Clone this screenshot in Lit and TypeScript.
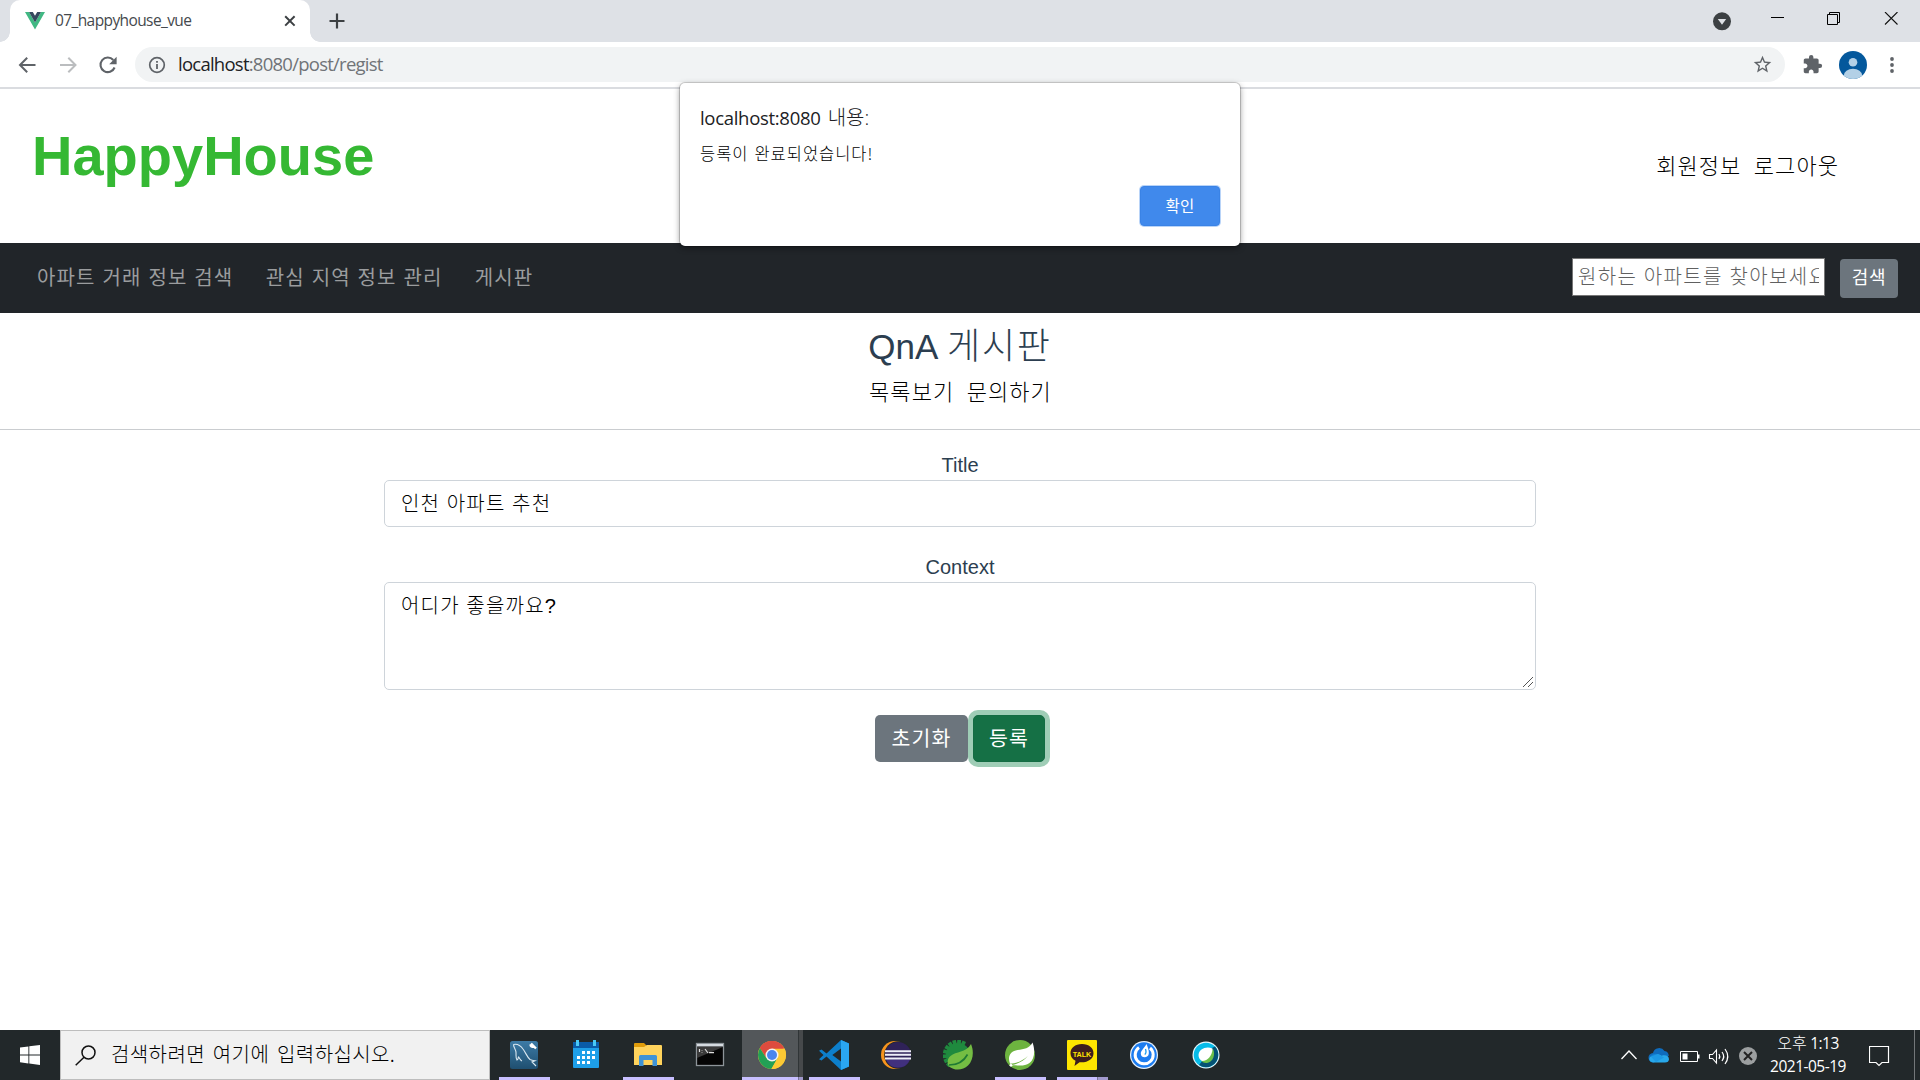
import { LitElement, html, css, svg } from "lit";
import { customElement } from "lit/decorators.js";

const UI_FONT = css`"Open Sans", "Noto Sans CJK KR", sans-serif`;

@customElement("browser-chrome")
class BrowserChrome extends LitElement {
  static styles = css`
    :host { display: block; height: 89px; font-family: ${UI_FONT}; }
    svg { display: block; flex: none; }
    .strip { height: 42px; background: #dee1e6; display: flex; align-items: flex-start; justify-content: space-between; }
    .left { display: flex; height: 42px; }
    .edge { width: 10px; align-self: flex-end; height: 10px; background: radial-gradient(circle at 0 0, #dee1e6 9.5px, #fff 10px); }
    .edge.right { background: radial-gradient(circle at 100% 0, #dee1e6 9.5px, #fff 10px); }
    .tab { width: 300px; box-sizing: border-box; height: 42px; background: #fff; border-radius: 10px 10px 0 0; display: flex; align-items: center; padding: 0 14px 0 15px; }
    .title { flex: 1; margin-left: 10px; font-size: 15.5px; letter-spacing: -0.6px; color: #45494d; line-height: 40px; height: 42px; font-weight: 400; }
    .plus { margin: 13px 0 0 9px; }
    .controls { display: flex; height: 42px; align-items: flex-start; }
    .drop { margin: 12px 38px 0 0; }
    .win { display: flex; gap: 43px; padding-top: 12px; margin-right: 22px; }
    .bar { height: 45px; background: #fff; display: flex; align-items: center; padding-left: 17px; }
    .nav { display: flex; gap: 20.5px; }
    .omni { margin-left: 17px; width: 1650px; height: 35px; border-radius: 18px; background: #f1f3f4; display: flex; align-items: center; padding: 0 12px 0 13px; box-sizing: border-box; }
    .url { flex: 1; margin-left: 12px; font-size: 18.5px; line-height: 33px; height: 35px; color: #707478; letter-spacing: -0.75px; }
    .host { color: #202124; }
    .ext { display: flex; align-items: center; gap: 16px; margin-left: 17px; }
    .line { height: 2px; background: #dadce0; }
  `;
  render() {
    return html`
      <div class="strip">
        <div class="left">
          <div class="edge"></div>
          <div class="tab">
            <svg width="20" height="18" viewBox="0 0 20 18"><path d="M0 0h4l6 10.5L16 0h4L10 17.5z" fill="#41b883"/><path d="M4 0h3.8L10 3.8 12.2 0H16l-6 10.5z" fill="#35495e"/></svg>
            <div class="title">07_happyhouse_vue</div>
            <svg width="12" height="12" viewBox="0 0 12 12"><path d="M1.2 1.2l9.4 9.4M10.6 1.2L1.2 10.6" stroke="#3c4043" stroke-width="2"/></svg>
          </div>
          <div class="edge right"></div>
          <svg class="plus" width="16" height="16" viewBox="0 0 16 16"><path d="M8 .5v15M.5 8h15" stroke="#3c4043" stroke-width="2.2"/></svg>
        </div>
        <div class="controls">
          <svg class="drop" width="20" height="20" viewBox="0 0 20 20"><circle cx="9" cy="9.3" r="9" fill="#3c4043"/><path d="M4.8 7h8.4L9 12.8z" fill="#dee1e6"/></svg>
          <div class="win">
            <svg width="13" height="13" viewBox="0 0 13 13"><path d="M0 5.5h13" stroke="#000"/></svg>
            <svg width="13" height="13" viewBox="0 0 13 13"><path d="M.5 2.5h10v10H.5zM2.5 2.5v-2h10v10h-2" fill="none" stroke="#000"/></svg>
            <svg width="15" height="13" viewBox="0 0 15 13"><path d="M2 0l12.5 12.5M14.5 0L2 12.5" fill="none" stroke="#111" stroke-width="1.1"/></svg>
          </div>
        </div>
      </div>
      <div class="bar">
        <div class="nav">
          <svg width="20" height="20" viewBox="0 0 20 20"><path d="M18.5 10H3.5M10.2 2.7L3 10l7.2 7.3" fill="none" stroke="#5f6368" stroke-width="2"/></svg>
          <svg width="20" height="20" viewBox="0 0 20 20"><path d="M2 10h15M10.3 2.7L17.5 10l-7.2 7.3" fill="none" stroke="#bbbdbf" stroke-width="2"/></svg>
          <svg width="20" height="20" viewBox="0 0 20 20"><path d="M16.6 12.5A7.3 7.3 0 1 1 15.3 5" fill="none" stroke="#5f6368" stroke-width="2.1"/><path d="M18.6 1.8v7.4h-7.4z" fill="#5f6368"/></svg>
        </div>
        <div class="omni">
          <svg width="18" height="18" viewBox="0 0 18 18"><circle cx="9" cy="9" r="7.3" fill="none" stroke="#5f6368" stroke-width="1.7"/><path d="M9 8v5M9 5v1.8" stroke="#5f6368" stroke-width="1.8"/></svg>
          <div class="url"><span class="host">localhost</span>:8080/post/regist</div>
          <svg width="21" height="21" viewBox="0 0 24 24"><path d="M22 9.24l-7.19-.62L12 2 9.19 8.63 2 9.24l5.46 4.73L5.82 21 12 17.27 18.18 21l-1.63-7.03L22 9.24zM12 15.4l-3.76 2.27 1-4.28-3.32-2.88 4.38-.38L12 6.1l1.71 4.04 4.38.38-3.32 2.88 1 4.28L12 15.4z" fill="#5f6368"/></svg>
        </div>
        <div class="ext">
          <svg width="21" height="21" viewBox="0 0 24 24"><path d="M20.5 11H19V7c0-1.1-.9-2-2-2h-4V3.500a2.500 2.500 0 0 0-5 0V5H4c-1.100 0-1.990.9-1.990 2v3.800H3.500c1.490 0 2.700 1.210 2.700 2.700s-1.210 2.700-2.700 2.700H2V20c0 1.100.9 2 2 2h3.800v-1.500c0-1.490 1.210-2.700 2.700-2.700s2.700 1.210 2.700 2.700V22H17c1.100 0 2-.9 2-2v-4h1.500a2.500 2.500 0 0 0 0-5z" fill="#5f6368"/></svg>
          <svg width="28" height="28" viewBox="0 0 28 28"><clipPath id="a"><circle cx="14" cy="14" r="14"/></clipPath><g clip-path="url(#a)"><rect width="28" height="28" fill="#04589c"/><circle cx="14" cy="11.300" r="4.300" fill="#b3d0e6"/><ellipse cx="14" cy="24.500" rx="9.200" ry="6.800" fill="#b3d0e6"/></g></svg>
          <svg width="18" height="18" viewBox="0 0 18 18"><g fill="#5f6368"><circle cx="9" cy="3" r="1.900"/><circle cx="9" cy="9" r="1.900"/><circle cx="9" cy="15" r="1.900"/></g></svg>
        </div>
      </div>
      <div class="line"></div>`;
  }
}

@customElement("alert-dialog")
class AlertDialog extends LitElement {
  static styles = css`
    :host { display: flex; flex-direction: column; box-sizing: border-box; width: 560px; height: 163px; background: #fff; border-radius: 5px; padding: 20px; box-shadow: 0 0 0 1px rgba(0,0,0,.16), 0 2px 6px rgba(0,0,0,.42); font-family: ${UI_FONT}; color: #202124; }
    .origin { font-size: 18.500px; line-height: 30px; height: 30px; letter-spacing: -0.300px; }
    .ko { font-size: 20px; letter-spacing: 0; font-weight: 300; margin-left: 2px; }
    .msg { font-size: 16.500px; line-height: 26px; margin-top: 7px; letter-spacing: .95px; word-spacing: 1.500px; font-family: "Noto Sans CJK KR", sans-serif; font-weight: 300; color: #000; }
    .ok { align-self: flex-end; margin-top: auto; width: 80px; height: 40px; border: 1px solid #3a83e6; border-radius: 4px; background: #4089ec; color: #fff; font: 400 15.500px/34px "Noto Sans CJK KR", sans-serif; letter-spacing: .3px; padding: 0 0 3px; box-shadow: 0 0 0 1px #b9d4f8; }
  `;
  render() {
    return html`
      <div class="origin">localhost:8080<span class="ko"> 내용:</span></div>
      <div class="msg">등록이 완료되었습니다!</div>
      <button class="ok">확인</button>`;
  }
}

@customElement("happy-page")
class HappyPage extends LitElement {
  static styles = css`
    :host { display: flex; flex-direction: column; height: 941px; background: #fff; font-family: "Liberation Sans", "Noto Sans CJK KR", sans-serif; font-size: 20px; color: #2c3e50; font-weight: 400; }
    .head { height: 154px; display: flex; justify-content: space-between; padding: 0 81px 0 32px; box-sizing: border-box; }
    .logo { font-size: 56px; font-weight: 700; line-height: 64px; color: #35b833; margin-top: 35px; }
    .links { display: flex; gap: 12.500px; font-size: 22px; line-height: 30px; letter-spacing: 1.050px; color: #000; font-weight: 300; }
    .head .links { margin-top: 63px; }
    .nav { height: 70px; background: #212529; display: flex; align-items: flex-start; padding: 0 22px 0 37px; box-sizing: border-box; }
    .menu { display: flex; gap: 32.300px; flex: 1; margin-top: 20px; color: #9a9c9e; line-height: 30px; letter-spacing: 1.100px; word-spacing: .3px; }
    .search { box-sizing: border-box; width: 253px; height: 38px; margin-top: 15px; border: 1px solid #767676; padding: 1px 5px; font: 300 20px/30px "Liberation Sans", "Noto Sans CJK KR", sans-serif; letter-spacing: 1.350px; word-spacing: -.3px; border-radius: 0; background: #fff; }
    .search::placeholder { color: #606060; opacity: 1; }
    .find { margin: 16px 0 0 15px; width: 58px; height: 39px; border: 0; border-radius: 4px; background: #6c757d; color: #fff; padding: 0 0 4px; font: 400 18px/33px "Noto Sans CJK KR", sans-serif; letter-spacing: .8px; }
    .board { display: flex; flex-direction: column; align-items: center; height: 116px; border-bottom: 1px solid #cacdd0; }
    h3 { margin: 13px 0 0; font-size: 35px; font-weight: 400; line-height: 42px; height: 42px; }
    .h-ko { font-size: 36px; font-weight: 300; letter-spacing: 1.800px; margin-left: 1px; }
    .board .links { margin-top: 10px; padding-left: 1px; }
    form { width: 1152px; margin: 0 auto; display: flex; flex-direction: column; align-items: stretch; }
    label { text-align: center; line-height: 30px; font-weight: 400; }
    .first { margin-top: 20px; }
    .second { margin-top: 25px; }
    .field { box-sizing: border-box; width: 100%; border: 1px solid #ced4da; border-radius: 5px; padding: 5px 16px 7px; font-family: "Liberation Sans", "Noto Sans CJK KR", sans-serif; font-size: 20px; font-weight: 300; line-height: 30px; letter-spacing: 1.200px; word-spacing: -.2px; color: #000; background: #fff; display: block; }
    .line { height: 47px; }
    .area { height: 108px; padding-top: 8px; }
    .area::-webkit-resizer { background: linear-gradient(135deg, transparent 6.600px, #555 6.700px, #555 7.500px, transparent 7.600px, transparent 10.100px, #555 10.200px, #555 11px, transparent 11.100px) 3px 3px / 10px 10px no-repeat; }
    .actions { display: flex; justify-content: center; gap: 5px; margin-top: 25px; }
    .btn { height: 47px; border: 0; border-radius: 5px; color: #fff; padding: 0 0 3px; font: 400 20.500px/30px "Noto Sans CJK KR", sans-serif; letter-spacing: 1.100px; }
    .reset { width: 93px; background: #6c757d; }
    .submit { width: 72px; background: #157045; border: 1px solid #146c43; box-shadow: 0 0 0 5px #9fcdb6; }
  `;
  render() {
    return html`
      <div class="head">
        <div class="logo">HappyHouse</div>
        <div class="links"><span>회원정보</span><span>로그아웃</span></div>
      </div>
      <div class="nav">
        <div class="menu"><span>아파트 거래 정보 검색</span><span>관심 지역 정보 관리</span><span>게시판</span></div>
        <input class="search" placeholder="원하는 아파트를 찾아보세요" />
        <button class="find">검색</button>
      </div>
      <div class="board">
        <h3>QnA <span class="h-ko">게시판</span></h3>
        <div class="links"><span>목록보기</span><span>문의하기</span></div>
      </div>
      <form>
        <label class="first">Title</label>
        <input class="field line" .value=${"인천 아파트 추천"} spellcheck="false" />
        <label class="second">Context</label>
        <textarea class="field area" .value=${"어디가 좋을까요?"} spellcheck="false"></textarea>
        <div class="actions">
          <button type="button" class="btn reset">초기화</button>
          <button type="button" class="btn submit">등록</button>
        </div>
      </form>`;
  }
}

const gearTeeth = Array.from({ length: 9 }, (_, i) => 135 + i * 20);

const icons = {
  mysql: svg`<defs><linearGradient id="my" x2="0" y2="1"><stop stop-color="#3d7ba6"/><stop offset="1" stop-color="#1f4f70"/></linearGradient></defs><rect x="1" y="1" width="28" height="28" rx="2.500" fill="url(#my)"/><path d="M4.500 4.500c4-1 7 1 9.500 4.500 3 4 4 8 7 10.500 1.500.7 3.500 1 5 1.200l-3 1.300 4 4M4.500 4.500c0 3 2.500 5 2.500 8 .2 3-.5 6 1 7.500 1.500-.5 1-2.500 1.500-3 1 1 2 3.500 3.500 4" fill="none" stroke="#dbe8f0" stroke-width="1.100"/><path d="M22 3.500l5 5M21.500 4.500c0 2 1.500 2.500 3 2" fill="none" stroke="#fff" stroke-width="2.400"/>`,
  calendar: svg`<rect x="2" y="2" width="26" height="26" rx="1" fill="#1e9fe8"/><path d="M2 2h26v6H2z" fill="#0a5ba8"/><path d="M5 0h3v6H5zM22 0h3v6h-3z" fill="#49c9f5"/><path d="M11 11h3v3h-3zM16 11h3v3h-3zM21 11h3v3h-3zM6 16h3v3H6zM11 16h3v3h-3zM16 16h3v3h-3zM21 16h3v3h-3zM6 21h3v3H6zM11 21h3v3h-3zM16 21h3v3h-3z" fill="#fff"/>`,
  folder: svg`<path d="M1 4a1 1 0 0 1 1-1h9l3 3v3H1z" fill="#e09c0a"/><path d="M1 7h10l3-2h14a1 1 0 0 1 1 1v19H1z" fill="#ffd35c"/><path d="M6 26V16.500a1.500 1.500 0 0 1 1.500-1.500h15a1.500 1.500 0 0 1 1.500 1.500V26h-4.500v-6h-9v6z" fill="#3f93d6"/>`,
  cmd: svg`<rect x="1.500" y="3.500" width="27" height="22" fill="#050505" stroke="#8d9499" stroke-width="1.300"/><path d="M2 4h26v2.500H2z" fill="#d5dbe0"/><path d="M2 7h26L2 18z" fill="#3a3a3a"/><path d="M4.500 9v3M7 10.300v.5M7 12.500v.5M10 9l3 4M14 12.600h5" stroke="#ddd" stroke-width="1.200"/>`,
  chrome: svg`<circle cx="15" cy="15" r="14" fill="#fcc934"/><path d="M15 15L2.900 8A14 14 0 0 1 27.100 8z" fill="#dd4b3e"/><path d="M15 8.500h12.400A14 14 0 0 0 2.900 8l6.300 10z" fill="#dd4b3e"/><path d="M2.900 8a14 14 0 0 0 11.500 21l6.200-11L15 15 9.400 18.300z" fill="#23a055"/><path d="M20.600 18.200L14.400 29A14 14 0 0 0 27.600 8.800H15z" fill="#fcc934"/><circle cx="15" cy="15" r="6.500" fill="#f3f3f3"/><circle cx="15" cy="15" r="5" fill="#4a86ee"/>`,
  vscode: svg`<path d="M22 0l8 3.500v23L22 30 7.500 16.600 2.500 20.500 0 19.200 4.500 15 0 10.800 2.500 9.500l5 3.900z" fill="#0d7fcb"/><path d="M22 8.500v13L13.300 15z" fill="#232829"/><path d="M22 0l8 3.500v23L22 30z" fill="#2aa6f2"/>`,
  eclipse: svg`<circle cx="14" cy="15" r="14" fill="#f7941e"/><circle cx="17" cy="15" r="13.800" fill="#232829"/><circle cx="17" cy="15" r="13" fill="#2f2258"/><path d="M5 19.500h24a13 13 0 0 1-24 0z" fill="#41307e"/><path d="M4 11.200h26M4 14.800h26M4 18.400h26" stroke="#efeff8" stroke-width="2"/>`,
  springTool: svg`<g fill="#1f8a3e">${gearTeeth.map((d) => svg`<rect x="26" y="13" width="4.200" height="3.800" transform="rotate(${d} 15 15)"/>`)}<circle cx="15" cy="15" r="12"/></g><path d="M28 4c3 7 2.500 16-3 21.500-5 5-13.500 5.500-19 1-2-3-2-8 1.500-10.500C13 11 23 13 28 4z" fill="#74bd43"/><path d="M6 25c9 0 15-4 18.500-10.500" fill="none" stroke="#1f7a34" stroke-width="1.700"/>`,
  spring: svg`<circle cx="15" cy="15" r="15" fill="#6db33f"/><path d="M27.500 2.500c3 8 2 17-3 20.500-5.500 4-12 2-18.500 2.300 6-1.300 13-4 17-9.500-5 5-11 7.500-18 8C2 16 6 11 12.500 10 19 9 24.500 8.500 27.500 2.500z" fill="#fff"/><circle cx="6" cy="25.300" r="1.400" fill="#fff"/>`,
  talk: svg`<rect width="30" height="30" rx="1" fill="#fee500"/><path d="M15 4C8 4 3.500 8 3.500 13.200c0 3.500 2 6 5 7.600L7.500 26l5-3.800c8 .8 14-3.200 14-9C26.500 8 22 4 15 4z" fill="#3c1e1e"/><text x="15" y="16.500" text-anchor="middle" font-family="Liberation Sans" font-weight="700" font-size="7.200" fill="#fee500">TALK</text>`,
  mattermost: svg`<circle cx="15" cy="15" r="14" fill="#e9f2fb"/><circle cx="15" cy="15" r="12.800" fill="#1c7cf0"/><path d="M10 7.500A9 9 0 1 0 21 8" fill="none" stroke="#fff" stroke-width="3"/><path d="M17.500 4c2 5 2.500 7 2.300 9.500-.3 5-8 5-8 .2 0-3 3-5 5.700-9.700z" fill="#fff"/><path d="M16.500 9c.8 2.500.6 4.500-.8 5.500" stroke="#1c9cf0" fill="none" stroke-width="1.300"/>`,
  webex: svg`<circle cx="15" cy="15" r="13.500" fill="#e8f6fb"/><circle cx="15" cy="15" r="12.300" fill="#07bbe8"/><path d="M27.300 15A12.300 12.300 0 0 1 8 25l4-5 9-12 3-1.500A12.300 12.300 0 0 1 27.300 15z" fill="#045274"/><path d="M22 9c2.500 5 .5 13-6 14-3 .3-5-1-6-3z" fill="#6cc04a"/><path d="M21.500 8.500C15 6 8 9 7.500 15c0 3 1.500 5 3.500 6 6 0 10.500-6 10.500-12.500z" fill="#fff"/>`,
};

const apps = [
  { icon: icons.mysql, state: "open" },
  { icon: icons.calendar, state: "" },
  { icon: icons.folder, state: "open" },
  { icon: icons.cmd, state: "" },
  { icon: icons.chrome, state: "active" },
  { icon: icons.vscode, state: "open" },
  { icon: icons.eclipse, state: "" },
  { icon: icons.springTool, state: "" },
  { icon: icons.spring, state: "open" },
  { icon: icons.talk, state: "open multi" },
  { icon: icons.mattermost, state: "" },
  { icon: icons.webex, state: "" },
];

@customElement("task-bar")
class TaskBar extends LitElement {
  static styles = css`
    :host { display: flex; height: 50px; background: #22282a; font-family: ${UI_FONT}; }
    svg { display: block; flex: none; }
    .start { width: 60px; display: flex; align-items: center; justify-content: center; }
    .search { width: 430px; box-sizing: border-box; background: #f1f1f1; border: 1px solid #bdbdbd; display: flex; padding-left: 14px; align-items: center; }
    .hint { margin-left: 15px; font: 300 20px/46px "Noto Sans CJK KR", sans-serif; height: 48px; letter-spacing: .4px; word-spacing: 3px; color: #000; }
    .apps { display: flex; flex: 1; padding-left: 3px; }
    .app { width: 62px; height: 50px; display: grid; grid-template-rows: 47px 3px; justify-items: center; align-items: center; }
    .app svg { margin-top: 3px; }
    .mark { width: 51px; height: 3px; }
    .open .mark { background: #c8bfff; }
    .multi .mark { background: linear-gradient(90deg, #c8bfff 40px, #787395 40px, #787395 41px, #a199cd 41px); }
    .active { background: linear-gradient(90deg, #53575a 56px, #303537 56px, #303537 57px, #46494b 57px); width: 61px; margin-left: 1px; }
    .active svg { margin-right: 2px; }
    .active .mark { width: 61px; background: linear-gradient(90deg, #c8bfff 56px, #787395 56px, #787395 57px, #a199cd 57px); }
    .tray { display: flex; align-items: center; }
    .tray svg { margin-top: 1px; }
    .clock { width: 90px; margin: 0 16px 0 6px; text-align: center; color: #fff; font-size: 15.500px; line-height: 23px; letter-spacing: -0.500px; }
    .ko { font-weight: 300; font-size: 16px; letter-spacing: 0; line-height: 1; }
    .edge { width: 1px; height: 50px; background: #737779; margin: 0 5px 0 24px; }
  `;
  render() {
    return html`
      <div class="start"><svg width="20" height="20" viewBox="0 0 20 20"><path d="M0 2.600l8.400-1.100v8H0zM9.300 1.300L20 0v9.500H9.300zM0 10.500h8.400v8L0 17.300zM9.300 10.500H20V20L9.300 18.600z" fill="#fff"/></svg></div>
      <div class="search">
        <svg width="21" height="21" viewBox="0 0 21 21"><circle cx="13.500" cy="7.500" r="6.500" fill="none" stroke="#111" stroke-width="1.500"/><path d="M9 12.200L.7 20.300" stroke="#111" stroke-width="1.500"/></svg>
        <div class="hint">검색하려면 여기에 입력하십시오.</div>
      </div>
      <div class="apps">
        ${apps.map((a) => html`<div class="app ${a.state}"><svg width="30" height="30" viewBox="0 0 30 30">${a.icon}</svg><div class="mark"></div></div>`)}
      </div>
      <div class="tray">
        <svg width="136" height="30" viewBox="0 0 136 30">
          <path d="M.5 18L8 10l7.500 8" fill="none" stroke="#fff" stroke-width="1.300"/>
          <path d="M32.500 21.500a4.700 4.700 0 0 1-.5-9.500 6.300 6.300 0 0 1 11.500-2c3 .3 4.300 2.500 4.300 5z" fill="#0f6cbd"/><path d="M32.500 21.500c-4 0-5.500-4-2.800-6l7-2.500q2.300.5 4 1.700c4-1.300 7.300.5 7.300 3.500 0 2-1.500 3.300-4 3.300z" fill="#28a8ea"/><path d="M29.500 15.300c3-3 6-3 8-1.800l5.500 3-8 4.500" fill="#1590df" opacity=".6"/>
          <path d="M59.500 10.500h17v10h-17z" fill="none" stroke="#fff"/><path d="M61.500 12.500h5v6h-5zM77 13.500h1.500v4H77z" fill="#fff"/>
          <path d="M88.500 13.500h3l4-4.500v13l-4-4.500h-3z" fill="none" stroke="#fff" stroke-width="1.100"/><path d="M98 13q1.500 2.500 0 5M101 11q3.500 4.500 0 9M104 8q5.500 7.500 0 15" fill="none" stroke="#fff" stroke-width="1.200"/>
          <circle cx="127" cy="15" r="9" fill="#9c9fa0"/><path d="M123 11l8 8M131 11l-8 8" stroke="#222" stroke-width="2"/>
        </svg>
        <div class="clock"><div><span class="ko">오후</span> 1:13</div><div>2021-05-19</div></div>
        <svg width="21" height="22" viewBox="0 0 21 22"><path d="M.5 1.500h19v16H13l-3 3-3-3H.5z" fill="none" stroke="#fff" stroke-width="1.200"/></svg>
        <div class="edge"></div>
      </div>`;
  }
}

@customElement("app-root")
class AppRoot extends LitElement {
  static styles = css`
    :host { display: block; position: relative; width: 1920px; height: 1080px; overflow: hidden; background: #fff; }
    .dialog { position: absolute; left: 680px; top: 83px; }
  `;
  render() {
    return html`
      <browser-chrome></browser-chrome>
      <happy-page></happy-page>
      <task-bar></task-bar>
      <alert-dialog class="dialog"></alert-dialog>`;
  }
}
